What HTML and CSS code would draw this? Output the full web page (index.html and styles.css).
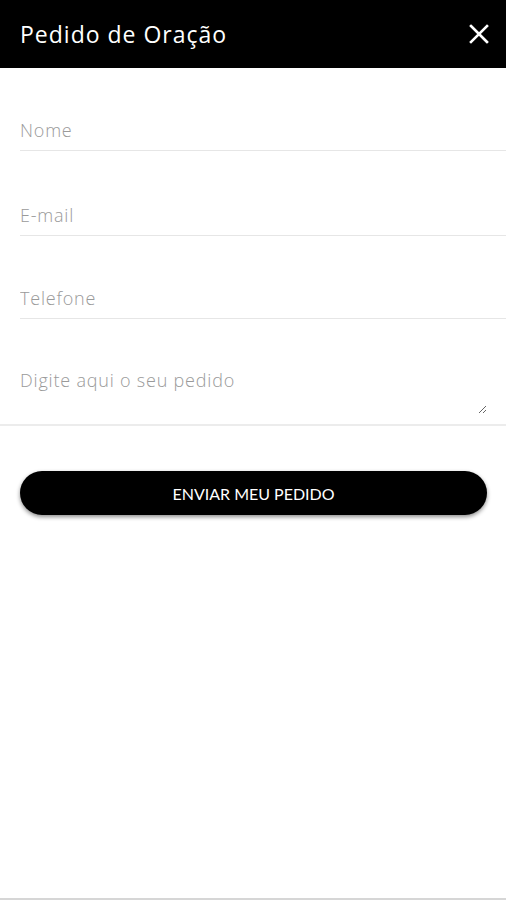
FILE: index.html
```html
<!DOCTYPE html>
<html lang="pt">
<head>
<meta charset="utf-8">
<title>Pedido de Oração</title>
<link rel="stylesheet" href="styles.css">
</head>
<body>
<div class="page">
  <header class="topbar">
    <h1 class="title">Pedido de Oração</h1>
    <button class="close" aria-label="Fechar">
      <svg width="20" height="20" viewBox="0 0 20 20"><path d="M2 2 L18 18 M18 2 L2 18" stroke="#fff" stroke-width="2.6" stroke-linecap="square" fill="none"/></svg>
    </button>
  </header>
  <form class="form">
    <div class="field f1"><input class="input" type="text" placeholder="Nome"></div>
    <div class="field f2"><input class="input" type="email" placeholder="E-mail"></div>
    <div class="field f3"><input class="input" type="tel" placeholder="Telefone"></div>
    <div class="area-wrap"><textarea class="area" placeholder="Digite aqui o seu pedido"></textarea></div>
    <button class="submit" type="button">ENVIAR MEU PEDIDO</button>
  </form>
</div>
</body>
</html>
```
FILE: styles.css
```css
* { box-sizing: border-box; }
html, body { margin: 0; padding: 0; background: #fff; }
body { font-family: "Open Sans", Lato, sans-serif; }
.page {
  height: 100vh;
  display: flex;
  flex-direction: column;
  border-bottom: 2px solid #d6d6d6;
}
.topbar {
  height: 68px;
  background: #000;
  display: flex;
  align-items: center;
  justify-content: space-between;
  padding: 0 17px 0 20px;
  flex-shrink: 0;
}
.title {
  margin: 0;
  color: #fff;
  font-weight: 400;
  font-size: 23px;
  letter-spacing: 1px;
}
.close {
  background: none;
  border: 0;
  padding: 0;
  width: 20px;
  height: 20px;
  display: flex;
}
.form {
  display: flex;
  flex-direction: column;
  padding-top: 42px;
}
.field {
  margin-left: 20px;
  border-bottom: 1px solid #e6e6e6;
}
.f1 { margin-bottom: 44px; }
.f2 { margin-bottom: 42px; }
.f3 { margin-bottom: 0; }
.input {
  display: block;
  width: 100%;
  height: 40px;
  border: 0;
  outline: none;
  padding: 0;
  font-family: inherit;
  font-weight: 300;
  font-size: 18px;
  letter-spacing: 0.8px;
  color: #333;
  background: transparent;
}
.input::placeholder, .area::placeholder { color: #9a9a9a; }
.area-wrap {
  margin-top: 43px;
  border-bottom: 2px solid #ececec;
  display: flex;
  padding-bottom: 10px;
}
.area {
  display: block;
  flex: 1;
  height: 52px;
  margin: 0 19px 0 20px;
  padding: 0;
  border: 0;
  outline: none;
  font-family: inherit;
  font-weight: 300;
  font-size: 18px;
  letter-spacing: 0.8px;
  line-height: 36px;
  color: #333;
  background: transparent;
}
.submit {
  margin: 45px 19px 0 20px;
  height: 44px;
  border: 0;
  border-radius: 22px;
  background: #000;
  color: #fff;
  font-family: Lato, sans-serif;
  font-size: 16px;
  box-shadow: 0 2px 4px rgba(0,0,0,0.45);
}
```
